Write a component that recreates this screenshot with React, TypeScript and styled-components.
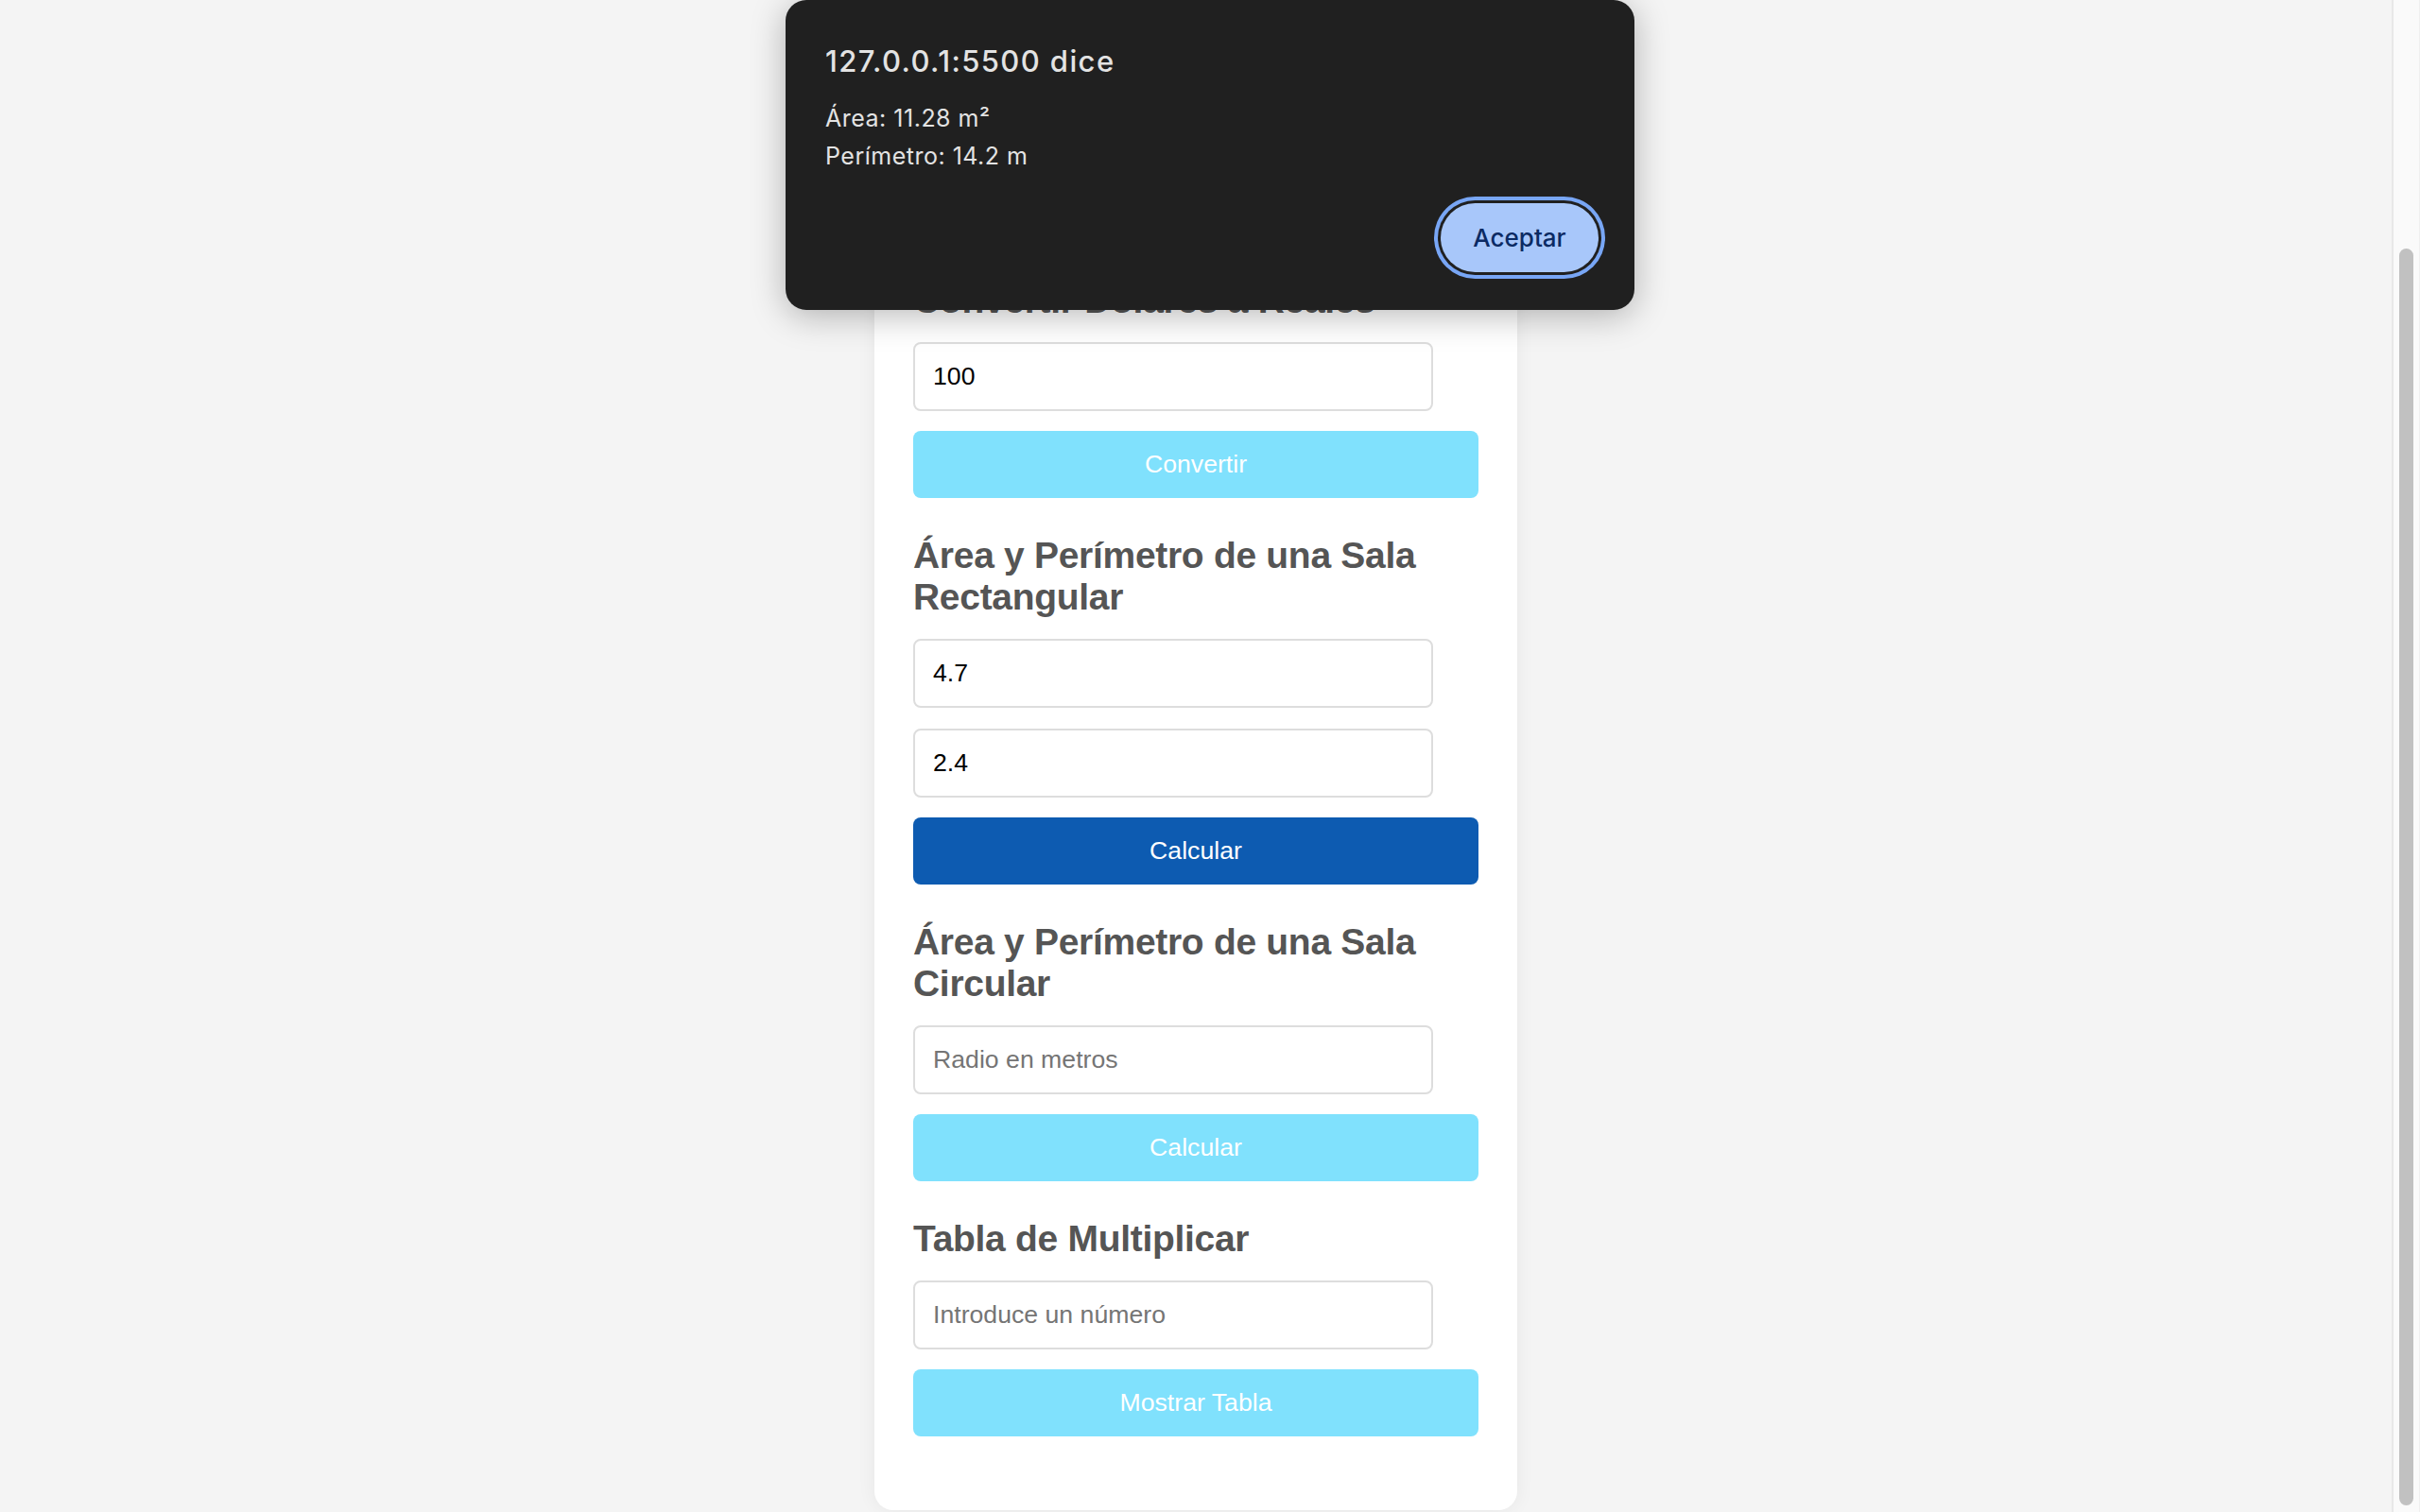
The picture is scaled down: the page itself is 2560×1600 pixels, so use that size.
import { FC } from "react";
import styled, { createGlobalStyle } from "styled-components";

const GlobalStyle = createGlobalStyle`
  html, body {
    margin: 0;
    padding: 0;
    height: 100%;
    overflow: hidden;
    background: #f4f4f4;
  }
`;

const Page = styled.div`
  display: flex;
  height: 100vh;
  position: relative;
`;

const Main = styled.main`
  flex: 1;
  display: flex;
  justify-content: center;
  align-items: flex-start;
  padding-top: 256px;
  background: #f4f4f4;
  overflow: hidden;
`;

const Card = styled.div`
  width: 680px;
  box-sizing: border-box;
  padding: 40px 41px 78px;
  background: #ffffff;
  border-radius: 20px;
  box-shadow: 0 0 20px rgba(0, 0, 0, 0.06);
  display: flex;
  flex-direction: column;
  gap: 39px;
  font-family: "Liberation Sans", Arial, sans-serif;
`;

const Section = styled.section`
  display: flex;
  flex-direction: column;
  align-items: flex-start;
`;

const Heading = styled.h2`
  margin: 0 0 22px;
  font-size: 39px;
  line-height: 44px;
  letter-spacing: -0.3px;
  font-weight: 700;
  color: #555555;
`;

const Field = styled.input`
  width: 550px;
  height: 73px;
  box-sizing: border-box;
  padding: 0 19px;
  border: 2px solid #dddddd;
  border-radius: 8px;
  font-family: "Liberation Sans", Arial, sans-serif;
  font-size: 26.67px;
  color: #000000;
  background: #ffffff;
  outline: none;

  & + & {
    margin-top: 22px;
  }

  &::placeholder {
    color: #757575;
  }
`;

const ActionButton = styled.button<{ $active?: boolean }>`
  width: 100%;
  height: 71px;
  margin-top: 21px;
  border: none;
  border-radius: 8px;
  background: ${(p) => (p.$active ? "#0d5bb1" : "#80e1fd")};
  color: #ffffff;
  font-family: "Liberation Sans", Arial, sans-serif;
  font-size: 26.67px;
  cursor: pointer;
`;

const ScrollTrack = styled.div`
  width: 30px;
  box-sizing: border-box;
  background: #fafafa;
  border-left: 2px solid #e8e8e8;
  border-right: 1px solid #f0f0f0;
  padding: 263px 6px 7px 6px;
  display: flex;
`;

const ScrollThumb = styled.div`
  flex: 1;
  background: #c1c1c1;
  border-radius: 8px;
`;

const Dialog = styled.div`
  position: absolute;
  top: 0;
  left: 50%;
  transform: translateX(-50%);
  width: 898px;
  height: 328px;
  box-sizing: border-box;
  padding: 45px 38px 40px 42px;
  background: #202020;
  border-radius: 22px;
  box-shadow: 0 6px 36px rgba(0, 0, 0, 0.28);
  display: flex;
  flex-direction: column;
  font-family: Inter, "Noto Sans", sans-serif;
  color: #e3e3e3;
`;

const DialogTitle = styled.div`
  font-size: 31px;
  font-weight: 500;
  letter-spacing: 1.4px;
  line-height: 40px;
  margin-bottom: 20px;
`;

const DialogText = styled.div`
  font-size: 25px;
  letter-spacing: 0.5px;
  line-height: 40px;
`;

const DialogActions = styled.div`
  display: flex;
  justify-content: flex-end;
  margin-top: auto;
`;

const AcceptButton = styled.button`
  width: 167px;
  height: 73px;
  border: none;
  border-radius: 999px;
  background: #a8c7fa;
  color: #0b2a63;
  font-family: Inter, "Noto Sans", sans-serif;
  font-size: 26px;
  font-weight: 500;
  box-shadow: 0 0 0 3px #202020, 0 0 0 7px #78a6f5;
  cursor: pointer;
`;

const App: FC = () => {
  return (
    <>
      <GlobalStyle />
      <Page>
        <Main>
          <Card>
            <Section>
              <Heading>Convertir Dólares a Reales</Heading>
              <Field type="number" defaultValue="100" />
              <ActionButton>Convertir</ActionButton>
            </Section>
            <Section>
              <Heading>Área y Perímetro de una Sala Rectangular</Heading>
              <Field type="text" defaultValue="4.7" />
              <Field type="text" defaultValue="2.4" />
              <ActionButton $active>Calcular</ActionButton>
            </Section>
            <Section>
              <Heading>Área y Perímetro de una Sala Circular</Heading>
              <Field type="text" placeholder="Radio en metros" />
              <ActionButton>Calcular</ActionButton>
            </Section>
            <Section>
              <Heading>Tabla de Multiplicar</Heading>
              <Field type="text" placeholder="Introduce un número" />
              <ActionButton>Mostrar Tabla</ActionButton>
            </Section>
          </Card>
        </Main>
        <ScrollTrack>
          <ScrollThumb />
        </ScrollTrack>
        <Dialog>
          <DialogTitle>127.0.0.1:5500 dice</DialogTitle>
          <DialogText>Área: 11.28 m²</DialogText>
          <DialogText>Perímetro: 14.2 m</DialogText>
          <DialogActions>
            <AcceptButton>Aceptar</AcceptButton>
          </DialogActions>
        </Dialog>
      </Page>
    </>
  );
};

export default App;
